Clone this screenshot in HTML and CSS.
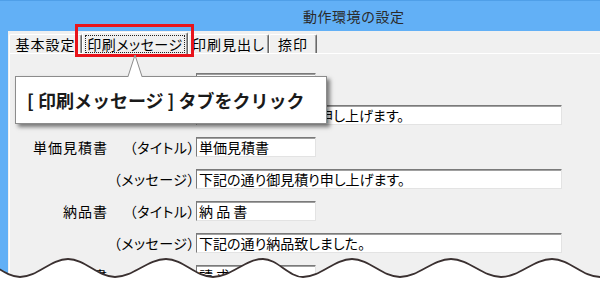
FILE: index.html
```html
<!DOCTYPE html>
<html lang="ja">
<head>
<meta charset="utf-8">
<title>動作環境の設定</title>
<link rel="stylesheet" href="styles.css">
</head>
<body>
<div class="screen">
  <header class="titlebar"><span class="title">動作環境の設定</span></header>
  <div class="window">
    <div class="tabs">
      <div class="tab tab-basic">基本設定</div>
      <div class="tab tab-active"><span class="focus">印刷メッセージ</span></div>
      <div class="tab tab-head">印刷見出し</div>
      <div class="tab tab-seal">捺印</div>
    </div>
    <div class="panel">
      <div class="row"><span class="name">見積書</span><span class="kind">（タイトル）</span><span class="field field-title">見 積 書</span></div>
      <div class="row"><span class="name"></span><span class="kind">（メッセージ）</span><span class="field field-msg">下記の通りお見積り申し上げます。</span></div>
      <div class="row"><span class="name">単価見積書</span><span class="kind">（タイトル）</span><span class="field field-title">単価見積書</span></div>
      <div class="row"><span class="name"></span><span class="kind">（メッセージ）</span><span class="field field-msg">下記の通り御見積り申し上げます。</span></div>
      <div class="row"><span class="name">納品書</span><span class="kind">（タイトル）</span><span class="field field-title">納 品 書</span></div>
      <div class="row"><span class="name"></span><span class="kind">（メッセージ）</span><span class="field field-msg">下記の通り納品致しました。</span></div>
      <div class="row"><span class="name">請求書</span><span class="kind">（タイトル）</span><span class="field field-title">請 求 書</span></div>
    </div>
  </div>

  <div class="highlight"></div>

  <div class="callout">
    <svg class="pointer" width="20" height="24" viewBox="0 0 20 24">
      <polygon points="9,1 2,23.5 16,23.5" fill="#fff"/>
      <polyline points="2,22.5 9,1 16,22.5" fill="none" stroke="#8c8c8c" stroke-width="1"/>
    </svg>
    <p class="callout-text">[ 印刷メッセージ ] タブをクリック</p>
  </div>

  <svg class="tear" width="600" height="40" viewBox="0 0 600 40">
    <path class="tear-fill" d="M-25,5 C-8.8,5 3.8,23 20,23 C37.3,23 50.7,5 68,5 C85.1,5 97.9,23 115,23 C133.4,23 147.6,5 166,5 C183.3,5 195.7,23 213,23 C231,23 245,5 263,5 C277.4,5 288.6,23 303,23 C320.6,23 334.4,5 352,5 C369.3,5 382.7,23 400,23 C418.4,23 432.6,5 451,5 C469,5 483,23 501,23 C519.4,23 533.6,5 552,5 C569.6,5 582.4,23 600,23 C617,23 630,5 648,5 L648,40 L-25,40 Z"/>
    <path class="tear-line" d="M-25,5 C-8.8,5 3.8,23 20,23 C37.3,23 50.7,5 68,5 C85.1,5 97.9,23 115,23 C133.4,23 147.6,5 166,5 C183.3,5 195.7,23 213,23 C231,23 245,5 263,5 C277.4,5 288.6,23 303,23 C320.6,23 334.4,5 352,5 C369.3,5 382.7,23 400,23 C418.4,23 432.6,5 451,5 C469,5 483,23 501,23 C519.4,23 533.6,5 552,5 C569.6,5 582.4,23 600,23 C617,23 630,5 648,5"/>
  </svg>
</div>
</body>
</html>
```

FILE: styles.css
```css
html, body {
  margin: 0;
  background: #fff;
}

.screen {
  position: relative;
  width: 600px;
  height: 294px;
  overflow: hidden;
  font-family: "Noto Sans CJK JP", "Noto Sans", sans-serif;
  color: #000;
}

.titlebar {
  height: 31px;
  box-sizing: border-box;
  background: #62b0f6;
  border-top: 1px solid #4f9fe8;
}

.title {
  display: block;
  padding-left: 303px;
  line-height: 30px;
  font-size: 14px;
  letter-spacing: 0.5px;
  color: #2a2a2a;
}

.window {
  height: 263px;
  box-sizing: border-box;
  border-left: 8px solid #62b0f6;
  background: #f0f0f0;
  padding-top: 1px;
  padding-left: 1px;
}

.tabs {
  display: flex;
  align-items: flex-end;
  height: 21px;
}

.tab {
  height: 19px;
  box-sizing: border-box;
  border-left: 1px solid #fff;
  border-top: 1px solid #fff;
  border-right: 1px solid #696969;
  box-shadow: inset -1px 0 #a0a0a0;
  border-radius: 2px 2px 0 0;
  font-size: 14px;
  letter-spacing: 1px;
  line-height: 18px;
  text-align: center;
  white-space: nowrap;
  background: #f0f0f0;
}

.tab-basic { width: 73px; }
.tab-head { width: 81px; font-feature-settings: "palt"; }
.tab-seal { width: 48px; }

.tab-active {
  position: relative;
  width: 106px;
  height: 23px;
  margin-bottom: -2px;
  padding: 2px 2px 0 2px;
}

.focus {
  display: block;
  height: 18px;
  box-sizing: border-box;
  border: 1px dotted #222;
  line-height: 16px;
  font-feature-settings: "palt";
  letter-spacing: 0.5px;
}

.panel {
  border-top: 1px solid #fff;
  border-left: 1px solid #fff;
  padding-top: 19px;
}

.row {
  display: flex;
  align-items: center;
  height: 20px;
  margin-bottom: 12px;
  font-size: 14px;
  white-space: nowrap;
}

.name {
  width: 98px;
  flex: none;
  text-align: right;
  letter-spacing: 1px;
}

.kind {
  width: 87px;
  flex: none;
  text-align: right;
  font-feature-settings: "palt";
  letter-spacing: 0.5px;
}

.field {
  flex: none;
  margin-left: 1px;
  height: 20px;
  box-sizing: border-box;
  background: #fff;
  border: 1px solid;
  border-color: #7a7a7a #e3e3e3 #e3e3e3 #7a7a7a;
  box-shadow: inset 0 1px #a0a0a0;
  padding-left: 2px;
  line-height: 18px;
  overflow: hidden;
  font-feature-settings: "palt";
}

.field-title { width: 120px; }
.field-msg { width: 366px; }

.highlight {
  position: absolute;
  left: 75px;
  top: 24px;
  width: 119px;
  height: 33px;
  box-sizing: border-box;
  border: 3px solid #e8141b;
}

.callout {
  position: absolute;
  left: 15px;
  top: 76px;
  width: 312px;
  height: 48px;
  box-sizing: border-box;
  background: #fff;
  border: 1px solid #8c8c8c;
  box-shadow: 3px 3px 4px rgba(0, 0, 0, 0.5);
}

.pointer {
  position: absolute;
  left: 110px;
  top: -23px;
  display: block;
}

.callout-text {
  margin: 0;
  padding-left: 11px;
  line-height: 46px;
  font-size: 18px;
  font-weight: 700;
  color: #1a1a1a;
  white-space: nowrap;
}

.tear {
  position: absolute;
  left: 0;
  bottom: 0;
  display: block;
}

.tear-fill {
  fill: #fff;
}

.tear-line {
  fill: none;
  stroke: #3a3030;
  stroke-width: 1.8;
}
```
